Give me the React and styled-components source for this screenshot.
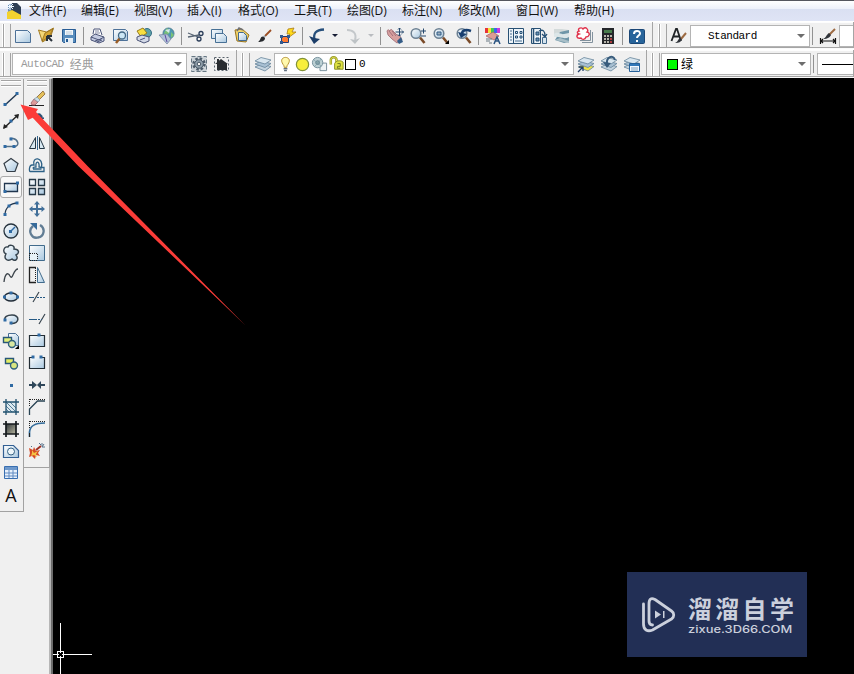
import React from "react"
import styled, {createGlobalStyle} from "styled-components"

const NAVY = "#20364f"
const BLUE = "#2f6aa3"

const menus = [
  {label: "文件(F)", width: 52},
  {label: "编辑(E)", width: 53},
  {label: "视图(V)", width: 53},
  {label: "插入(I)", width: 51},
  {label: "格式(O)", width: 56},
  {label: "工具(T)", width: 53},
  {label: "绘图(D)", width: 55},
  {label: "标注(N)", width: 56},
  {label: "修改(M)", width: 58},
  {label: "窗口(W)", width: 58},
  {label: "帮助(H)", width: 60}
]

const standardTools = [
  "new", "open", "save", "|",
  "print", "preview", "publish", "dwf", "|",
  "cut", "copy", "paste", "brush", "blockEdit", "|",
  "undo", "more", "redo", "moreOff", "|",
  "pan", "zoom", "zoomWindow", "zoomPrevious", "|",
  "properties", "designCenter", "palettes", "sheetSet", "markup", "calculator", "|",
  "help"
]

const drawTools = [
  "line", "xline", "pline", "polygon", "rectangle", "arc", "circle", "cloud",
  "spline", "ellipse", "ellipseArc", "insertBlock", "makeBlock", "point",
  "hatch", "gradient", "region", "table", "text"
]

const modifyTools = [
  "erase", "copyObject", "mirror", "offset", "array", "move", "rotate", "scale",
  "stretch", "trim", "extend", "breakPoint", "break", "join", "chamfer",
  "fillet", "explode"
]

const Dot = ({x, y, s = 3}) => (
  <rect x={x - s / 2} y={y - s / 2} width={s} height={s} fill={BLUE}/>
)

const Lens = ({x = 7, y = 6.5, r = 4.8}) => (
  <g>
    <path d={`M${x + 4} ${y + 4}L15.500 16`} stroke="#7a4a28" strokeWidth="2.600"/>
    <circle cx={x} cy={y} r={r} fill="url(#ice)" stroke="#6d8193" strokeWidth="1.500"/>
  </g>
)

const Layers = ({bottom = "#c3d3df"}) => (
  <g stroke="#66849b" strokeWidth=".8">
    <path d="M1 12l6-3 10 2.500-6 4.500z" fill={bottom}/>
    <path d="M1 9l6-3 10 2.500-6 4z" fill="#a8c0d3"/>
    <path d="M1 6l6-3.500 10 2.500-6 4z" fill="#d8e6ef"/>
  </g>
)

const glyphs = {
  new: <path d="M1.500 3.500h12l3 3v9h-15z" fill="url(#ice)" stroke="#4d7198"/>,
  open: (
    <g>
      <path d="M1.500 3l8 2 7-4-3 9-8 5z" fill="#f4d878" stroke="#a37b22"/>
      <path d="M5 14l3-8 8-4-4 8z" fill="#d6a735" stroke="#876116" strokeWidth=".7"/>
      <path d="M10 9l5 5m-5-5v5m0-5h5" stroke="#29323b" strokeWidth="2"/>
    </g>
  ),
  save: (
    <g>
      <path d="M2.500 2.500h13v13h-12l-1-1z" fill="#588dbd" stroke="#285c94"/>
      <path d="M5 3h8v5H5z" fill="#f5f9fc"/>
      <path d="M5 11h8v5H5z" fill="#e5eef6"/>
      <path d="M6 12h2v3H6z" fill="#245990"/>
      <path d="M6 5h6M6 7h6" stroke="#a4b8ca" strokeWidth=".7"/>
    </g>
  ),
  print: (
    <g stroke="#4c5578">
      <path d="M4 7l1-5h6l2 6" fill="#fff"/>
      <path d="M2 10l4-3 9 3v4l-5 2-8-3z" fill="#c4cbe1"/>
      <path d="M2 10l8 3 5-3m-9 4l6-2m-4 3l5-2" fill="none"/>
      <path d="M6 4h4M6 6h5" strokeWidth=".7"/>
    </g>
  ),
  preview: (
    <g>
      <path d="M1.500 2.500h12l2 2v9h-14z" fill="url(#ice)" stroke="#4d7198"/>
      <path d="M8 11l-4 5" stroke="#985c25" strokeWidth="2.500"/>
      <circle cx="10" cy="8.500" r="3.500" fill="#cce7f5" stroke="#426784" strokeWidth="1.300"/>
    </g>
  ),
  publish: (
    <g>
      <circle cx="12" cy="6" r="4.500" fill="#5da1a6" stroke="#356d85"/>
      <path d="M2 4l6-3 4 5-6 4z" fill="#f8df40" stroke="#987d1d"/>
      <path d="M2 10l5-2 7 2v4l-5 2-7-3z" fill="#d3d9e7" stroke="#4c5578"/>
      <path d="M5 13l5-2" stroke="#4c5578"/>
    </g>
  ),
  dwf: (
    <g>
      <circle cx="10.500" cy="6.500" r="5.500" fill="#4f98b2" stroke="#528094"/>
      <path d="M9 1l3 4-4 5-2-4zM13 5l3 3-3 3z" fill="#7ac276"/>
      <path d="M7 3l5-1-1 4z" fill="#d6e9e9"/>
      <path d="M1 8l8-1 4 5-4 5z" fill="#b1c1d8" stroke="#6e809e" strokeWidth=".7"/>
      <path d="M7 8l2 7" stroke="#5c47a1"/>
    </g>
  ),
  cut: (
    <g fill="none" stroke="#293c58" strokeWidth="1.300">
      <path d="M1 6l10 4M1 10l11-2" stroke="#596675"/>
      <circle cx="14" cy="6.500" r="2"/>
      <circle cx="12" cy="12" r="2"/>
    </g>
  ),
  copy: (
    <g fill="url(#ice)" stroke="#477095">
      <path d="M1.500 2.500h11v9h-11z"/>
      <path d="M5.500 6.500h8l3 3v6h-11z"/>
    </g>
  ),
  paste: (
    <g>
      <path d="M2 3l7-1 7 6-3 7-9-1z" fill="#efd26a" stroke="#97731f"/>
      <path d="M5.500 5.500h5l3 3v5h-8z" fill="url(#ice)" stroke="#426a91"/>
      <path d="M4 4l2-3 4 2" fill="none" stroke="#6f7177" strokeWidth="1.500"/>
    </g>
  ),
  brush: (
    <g>
      <path d="M9 9l6-6" stroke="#9c4f24" strokeWidth="1.800"/>
      <path d="M7.500 9l1.500 1.500" stroke="#a6afb7" strokeWidth="2.500"/>
      <path d="M2 15c4 0 7-1 7-4L7 9.500c-3 0-2 3.500-5 5.500z" fill="#26292d"/>
    </g>
  ),
  blockEdit: (
    <g>
      <path d="M2.500 9.500h7v6h-7z" fill="#ff7b32" stroke="#263e76"/>
      <path d="M9 2l6-1-2 4h4l-8 6 2-4H8z" fill="#ffda1c" stroke="#a97b14" strokeWidth=".8"/>
      <path d="M1 8h3v3H1zM8 8h3v3H8zM1 14h3v3H1z" fill="#315b91"/>
    </g>
  ),
  undo: (
    <g>
      <path d="M6.500 13C5 6 8 3 16 2.500" fill="none" stroke="#264f7b" strokeWidth="2.300"/>
      <path d="M1 9l5 8 6-5-5.500-1z" fill="#1c3e69"/>
    </g>
  ),
  redo: (
    <g>
      <path d="M11 13C13 6 9 3 3 3" fill="none" stroke="#c4c8cb" strokeWidth="2"/>
      <path d="M6 12l5 5 5-6-5 2z" fill="#bdc2c5"/>
    </g>
  ),
  pan: (
    <g>
      <path d="M1 4c1-2 2-1 3 0 0-2 2-2 3 0l4 4 3 1 2 4-5 3-5-4-4-4z" fill="#d8a09f" stroke="#9a6770" strokeWidth=".8"/>
      <path d="M3 4l4 5M6 4l4 5" stroke="#966571" strokeWidth=".8"/>
      <path d="M11 14l4-4 2 5-4 2z" fill="#345c87"/>
      <path d="M13.500 1v8M9.500 5h8M12 2.500L13.500 1 15 2.500M12 7.500L13.500 9 15 7.500M16 3.500L17.500 5 16 6.500" fill="none" stroke="#24476c"/>
    </g>
  ),
  zoom: <g><Lens/><path d="M12 4h5M14.500 1.500v5M12 9h5" stroke="#24476c"/></g>,
  zoomWindow: <g><Lens/><path d="M5 5h4v3H5z" fill="#9eafbd" stroke="#315d87"/><path d="M13 17h4v-4z" fill="#000"/></g>,
  zoomPrevious: <g><Lens/><path d="M7 7c0-4 4-5 9-3" fill="none" stroke="#183f70" strokeWidth="2.500"/><path d="M3 5l3 6 6-4z" fill="#183f70"/></g>,
  properties: (
    <g>
      <path d="M1 1h3v5H1z" fill="#e93436"/><path d="M4 1h3v5H4z" fill="#f3e63b"/>
      <path d="M7 1h3v5H7z" fill="#42c854"/><path d="M10 1h3v5h-3z" fill="#3967ed"/><path d="M13 1h3v5h-3z" fill="#c839dc"/>
      <path d="M2 9l7-4 6 4-5 4z" fill="#dc9b94" stroke="#a25d60" strokeWidth=".7"/>
      <path d="M2 12h6M2 14h4M5 16h3" stroke="#687883"/>
      <path d="M10 17l3-7 3 7m-5-3h4" stroke="#295380" fill="none" strokeWidth="1.500"/>
    </g>
  ),
  designCenter: (
    <g>
      <path d="M1.500 1.500h15v15h-15zM6.500 2v14" fill="#edf4f9" stroke="#295174"/>
      <path d="M3 4h2M3 7h2M3 10h2M3 13h2" stroke="#466d90"/>
      <path d="M8.500 4.500h2v2h-2zM13 4.500h2v2h-2zM8.500 9h2v2h-2zM13 9h2v2h-2z" fill="none" stroke="#244f75"/>
      <path d="M8 14h7" stroke="#466d90"/>
    </g>
  ),
  palettes: (
    <g>
      <path d="M1.500 1.500h9v15h-9z" fill="#edf4f9" stroke="#295174"/>
      <path d="M3.500 2v14" stroke="#295174" strokeWidth="1.500"/>
      <path d="M6 5h3v3H6zM6 11h3v3H6z" fill="#6790b1" stroke="#244f75"/>
      <path d="M9 4c4-2 6 0 6 5m-3-2l3 3 2-3" fill="none" stroke="#244f75" strokeWidth="1.300"/>
      <path d="M12.500 10.500h4v6h-4z" fill="#d6e4ee" stroke="#41698b"/>
    </g>
  ),
  sheetSet: (
    <g>
      <path d="M1 2h8l7 1v9l-7-1-8-2z" fill="#d3dada"/>
      <path d="M7 5l9-2v12l-5 1-9-3z" fill="#6f96a8"/>
      <path d="M1 7c4-3 7 1 10 0l5-1v4c-5 3-9-1-15 0z" fill="#dce6e8"/>
      <path d="M2 13l5-2 9 3v2z" fill="#a9bfc8"/>
    </g>
  ),
  markup: (
    <g>
      <path d="M6 15.500h10.500V5M4 13.500h10.500V3" fill="none" stroke="#81919d"/>
      <path d="M3 4c-2-3 3-4 4-2 3-3 6 1 4 3 4 1 2 5-1 5-1 3-4 3-5 1-5 1-5-3-2-4-3-1-1-3 0-3z" fill="#fff" stroke="#e0324b" strokeWidth="1.400"/>
    </g>
  ),
  calculator: (
    <g>
      <path d="M3 1h12v16H3z" fill="#24262a"/><path d="M5 3h8v3H5z" fill="#487c4c"/>
      <path d="M5 9h2M8 9h2M11 9h2M5 12h2M8 12h2M5 15h2M8 15h2" stroke="#e7e5d6" strokeWidth="1.500"/>
      <path d="M11 12h2M11 15h2" stroke="#db4646" strokeWidth="1.500"/>
    </g>
  ),
  help: (
    <g>
      <rect x="1.500" y="2.500" width="15" height="14" rx="1" fill="#28649a" stroke="#1b4776"/>
      <path d="M6 7c0-4 6-4 6-.5 0 2-3 2-3 4.500M9 13v2" fill="none" stroke="#fff" strokeWidth="2"/>
    </g>
  ),
  textStyle: (
    <g>
      <path d="M1.500 14L6 2h1l4 12M3.500 9.500h6" fill="none" stroke="#202427" strokeWidth="1.800"/>
      <path d="M11 12l5-6" stroke="#9c6a42" strokeWidth="2"/>
      <path d="M5 16c4 0 6-1 7-4l-2-1c-2 1-2 4-5 5z" fill="#30343a"/>
    </g>
  ),
  dimStyle: (
    <g>
      <path d="M1.500 11v6M16.500 11v6M2 14h14M4 12l-2 2 2 2M14 12l2 2-2 2" fill="none" stroke="#111" strokeWidth="1.200"/>
      <path d="M10 8l6-6" stroke="#9c6a42" strokeWidth="2"/>
      <path d="M4 12c5 0 7-2 8-4l-2-2c-3 2-3 5-6 6z" fill="#30343a"/>
    </g>
  ),
  settings: (
    <g>
      <path d="M1.500 1.500h15v15h-15z" fill="#cbd2d7" stroke="#667783" strokeDasharray="4 2"/>
      <circle cx="9" cy="9" r="5.500" stroke="#4c5b69" strokeWidth="2.500" strokeDasharray="2.500 1.800"/>
      <circle cx="9" cy="9" r="4.300" fill="#93a2ae" stroke="#485866"/>
      <circle cx="9" cy="9" r="1.800" fill="#f5f5f5" stroke="#465562"/>
    </g>
  ),
  workspace: (
    <g>
      <rect x="1.500" y="2.500" width="14" height="13" stroke="#59636c" strokeDasharray="2 2"/>
      <path d="M2 9l6-5 7 5h-1v6H4V9z" fill="#292d31"/><path d="M4 4h2v4H4z" fill="#292d31"/>
    </g>
  ),
  layers: <Layers/>,
  layerCurrent: <g><Layers bottom="#f1e343"/><path d="M1 17l5-5m-4 0h4v4" fill="none" stroke="#203e67" strokeWidth="1.300"/></g>,
  layerPrevious: <g><Layers/><path d="M7 9c-1-7 6-10 8-4" fill="none" stroke="#375b7c" strokeWidth="2"/><path d="M3 7l4 6 4-5z" fill="#375b7c"/></g>,
  layerState: <g><Layers/><path d="M6.500 8.500h10v8h-10z" fill="#f4f9ff" stroke="#25619a"/><path d="M7 9h9v2H7z" fill="#3278b8"/><path d="M8 13h7M8 15h7" stroke="#799ebc"/></g>,
  bulb: (
    <g>
      <path d="M6.500 9C3 4 6 1.500 9 1.500S15 4 11.500 9c-1 1-1 2-1 3h-3c0-1 0-2-1-3z" fill="#fff9ae" stroke="#b18d2c"/>
      <path d="M7 13.500h4M7.500 15.500h3" stroke="#627080" strokeWidth="1.500"/>
    </g>
  ),
  sun: <circle cx="9" cy="9" r="6.500" fill="#f7ee3c" stroke="#829238" strokeWidth="1.300"/>,
  freeze: (
    <g>
      <path d="M9.500 7.500h7v8h-7z" fill="#edf3f5" stroke="#758c99"/>
      <circle cx="7" cy="7" r="5.500" fill="#bcd0d4" stroke="#718d99"/>
      <circle cx="7" cy="7" r="2" fill="#8eadb0" stroke="#638390"/>
      <path d="M3 4l8 7M11 3l-7 8" stroke="#7898a2" strokeWidth=".7"/>
    </g>
  ),
  lock: (
    <g>
      <path d="M3 9V4c0-3.500 6-3.500 6 0v6" fill="none" stroke="#92951d" strokeWidth="2.600"/>
      <path d="M3 9V4c0-3.500 6-3.500 6 0v6" fill="none" stroke="#eae85a"/>
      <path d="M8 6.500c2-2 6-2 8 0V14H7V8z" fill="#dfe240" stroke="#8b9121"/>
      <path d="M10 8h3v3h-3v2h3" fill="none" stroke="#747c20"/>
    </g>
  ),
  line: <g><path d="M3 15L15 4" stroke={NAVY} strokeWidth="1.400"/><Dot x={3} y={14.5}/><Dot x={15} y={3.5}/></g>,
  xline: <g><path d="M2 16L16 3" stroke="#222" strokeWidth="1.400"/><path d="M1 17l1-5 4 3zM17 2l-5 1 4 4z" fill="#222"/><Dot x={9} y={9}/></g>,
  pline: <g><path d="M3 12.500h10c5-1 3-7-2-8H8" fill="none" stroke="#526f88" strokeWidth="1.400"/><Dot x={3} y={12.5}/><Dot x={9} y={5}/><Dot x={12} y={12.5}/></g>,
  polygon: <path d="M9 2.500l7 5-3 8H5l-3-8z" fill="url(#ice)" stroke="#343e47" strokeWidth="1.200"/>,
  rectangle: <g><path d="M2.500 5.500h13v8h-13z" fill="url(#ice)" stroke={NAVY} strokeWidth="1.300"/><Dot x={3} y={13.5}/><Dot x={15.5} y={5}/></g>,
  arc: <g><path d="M3 15C3 8 8 3 16 3" fill="none" stroke={NAVY} strokeWidth="1.300"/><Dot x={3} y={14.5}/><Dot x={7} y={6}/><Dot x={15} y={3}/></g>,
  circle: <g><circle cx="9" cy="9" r="7" fill="url(#ice)" stroke="#26333e" strokeWidth="1.300"/><path d="M8 10l5-5" stroke={BLUE} strokeWidth="1.500"/><Dot x={8.5} y={9.5}/></g>,
  cloud: <path d="M4 10C0 8 2 2 6 3c1-3 7-2 6 2 5 0 6 4 2 6 3 4-1 7-4 4-4 3-9 0-6-5z" fill="url(#ice)" stroke="#34414b" strokeWidth="1.400"/>,
  spline: <path d="M2 16C3 7 6 6 8 10c3 5 3-7 8-7" fill="none" stroke="#3b434a" strokeWidth="1.300"/>,
  ellipse: <g><ellipse cx="9" cy="9" rx="6.500" ry="4" fill="url(#ice)" stroke="#222d38" strokeWidth="1.400"/><Dot x={2.5} y={9}/><Dot x={15.5} y={9}/><Dot x={9} y={5}/></g>,
  ellipseArc: <g><path d="M9 13.500c9 0 9-8.500 1-8.500-5 0-8 2-7 5l6 1z" fill="url(#ice)"/><path d="M9 13.500c9 0 9-8.500 1-8.500-5 0-8 2-7 5" stroke="#34414b" strokeWidth="1.500"/><Dot x={3} y={10}/><Dot x={9} y={13}/></g>,
  insertBlock: (
    <g>
      <path d="M6.500 1.500h7l3 3v9h-10z" fill="url(#ice)" stroke="#496e93"/>
      <path d="M1.500 5.500h8v5h-8z" fill="#e2ef79" stroke="#285777" strokeWidth="1.400"/>
      <circle cx="10" cy="12" r="3.500" fill="#d8e7a1" stroke="#31617d" strokeWidth="1.400"/>
      <path d="M13 17h4v-4z" fill="#000"/>
    </g>
  ),
  makeBlock: <g><path d="M3.500 4.500h8v5h-8z" fill="#e3ed62" stroke="#285777" strokeWidth="1.400"/><circle cx="12" cy="11.500" r="3.500" fill="#d8e580" stroke="#31617d" strokeWidth="1.400"/></g>,
  point: <rect x="8" y="8" width="3" height="3" fill={BLUE}/>,
  hatch: <g><path d="M4 4h10v10H4z" fill="#dbe9ef"/><path d="M4 4l10 10M4 8l6 6M8 4l6 6M4 11l3 3" stroke="#557d98"/><path d="M1 4h16M1 14h16M4 1v16M14 1v16" stroke="#21516f" strokeWidth="1.300"/></g>,
  gradient: <g><path d="M4 4h10v10H4z" fill="url(#metal)"/><path d="M1 4h16M1 14h16M4 1v16M14 1v16" stroke="#14191d" strokeWidth="1.700"/></g>,
  region: <g><path d="M1.500 3.500h10l5 5v7h-15z" fill="url(#ice)" stroke="#325f93" strokeWidth="1.200"/><circle cx="9" cy="9.500" r="3.500" fill="#eef6fa" stroke="#315f83"/></g>,
  table: (
    <g>
      <path d="M2.500 2.500h13v12h-13z" fill="#e8f1fc" stroke="#386eb0"/>
      <path d="M3 3h12v3H3z" fill="#6d98cc"/>
      <path d="M3 9h12M3 12h12M7 6v8M11 6v8" stroke="#618bc2"/>
    </g>
  ),
  erase: (
    <g>
      <path d="M1 15.500h15" stroke="#222"/><path d="M8 8l7-7 2 3-7 7z" fill="#e5c15b" stroke="#846130" strokeWidth=".8"/>
      <path d="M6 9l4 3-3 3H4l-1-2z" fill="#dd9b9a" stroke="#99606a" strokeWidth=".8"/>
      <path d="M6 9l3-2 3 3-2 2z" fill="#c9dce7" stroke="#78909c" strokeWidth=".6"/>
    </g>
  ),
  copyObject: <path d="M8 3c3-3 7 0 6 3l2 0-4 3-2-4 2 0c0-2-2-2-4-2z" fill="#285175" stroke="#285175"/>,
  mirror: <g><path d="M7.500 3.500v11h-6zM11.500 3.500v11h5z" fill="#d9e9f2" stroke="#243745"/><path d="M9.500 2v14" stroke="#356790"/></g>,
  offset: (
    <g fill="none" stroke="#2d6186" strokeWidth="1.300">
      <path d="M2 15.500h14v-4h-2.500C16 1 3.500 0 6 9H4c-3 0-3 6.500-2 6.500z"/>
      <path d="M5 13h8.500M5 12.500c0-2 1-1 3-1.500-1-7 4-6 3 0l2.500.5"/>
    </g>
  ),
  array: <g fill="url(#ice)" stroke="#263947" strokeWidth="1.300"><path d="M1.500 1.500h6v6h-6zM10.500 1.500h6v6h-6zM1.500 10.500h6v6h-6zM10.500 10.500h6v6h-6z"/></g>,
  move: <path d="M9 1l3 3.500h-2V8h3.500V6l3.500 3-3.500 3v-2H10v3.500h2L9 17l-3-3.500h2V10H4.500v2L1 9l3.500-3v2H8V4.500H6z" fill="#416f99"/>,
  rotate: <g><path d="M5 4C-1 9 4 17 10 15.500c6-1 8-9 2-12.500" fill="none" stroke="#627d94" strokeWidth="2.300"/><path d="M2 1h7v7z" fill="#376b9a"/></g>,
  scale: <g><path d="M1.500 1.500h15v15h-15z" fill="url(#ice)" stroke="#416b8c"/><path d="M2 9h7v7H2z" fill="#e8f2f7"/><path d="M2 9.500h7.500V16M1.500 9v7.500H10" fill="none" stroke="#222" strokeDasharray="1 1"/></g>,
  stretch: <g><path d="M9.500 1.500l7 15h-7z" fill="url(#ice)" stroke="#416b8c"/><path d="M8 1.500H1.500v15H8" fill="none" stroke="#222" strokeWidth="1.300"/><path d="M7.500 2v14" stroke="#222" strokeDasharray="1 1"/></g>,
  trim: <g><path d="M1 9.500h5" stroke="#255984"/><path d="M5 14L11 4" stroke="#39454f" strokeWidth="1.200"/><path d="M9 9.500h8" stroke="#255984" strokeDasharray="2 1"/></g>,
  extend: <g><path d="M1 9.500h6" stroke="#255984"/><path d="M11 14l6-10" stroke="#39454f" strokeWidth="1.200"/><path d="M7 9.500h7" stroke="#255984" strokeDasharray="2 1"/></g>,
  breakPoint: <g><path d="M1.500 3.500h15v11h-15z" fill="url(#ice)" stroke="#222d35" strokeWidth="1.200"/><Dot x={11} y={3}/></g>,
  break: <g><path d="M5 3.500H1.500v11h15v-11H13" fill="url(#ice)" stroke="#222d35" strokeWidth="1.200"/><Dot x={5} y={3}/><Dot x={13} y={3}/></g>,
  join: <path d="M1 8h3V5l5 4 4-4v3h4v2h-4v3L9 9l-5 4v-3H1z" fill="#2e4659"/>,
  chamfer: <g fill="none"><path d="M2 1.500h15M1.500 1v8" stroke="#222" strokeDasharray="1 1"/><path d="M1.500 17v-6l8-8H17" stroke="#294353" strokeWidth="1.300"/></g>,
  fillet: <g fill="none"><path d="M2 1.500h15M1.500 1v8" stroke="#222" strokeDasharray="1 1"/><path d="M1.500 17v-5C2 6 6 3 17 3" stroke="#326b9a" strokeWidth="1.700"/><path d="M1.500 17v-4" stroke="#222"/></g>,
  explode: (
    <g>
      <path d="M1 6l4 2 1-3 2 4 4-1-2 3 2 3-4-1-1 4-3-3-3 1 1-4z" fill="#d64a26"/>
      <path d="M4 8l2 3 4-2-2 3 1 3-3-2-3 1 1-3z" fill="#f5c143"/>
      <path d="M8 8l5-4" stroke="#9e3024" strokeWidth="2"/>
      <path d="M11 1l2 2m1-2v3m2-2l-2 3m3 0h-3M3 4l1 1" stroke="#54708a"/>
    </g>
  )
}

const Icon = ({name}) => {
  if (name === "text") return <LetterIcon>A</LetterIcon>
  return <Glyph viewBox="0 0 18 18" fill="none">{glyphs[name]}</Glyph>
}

const Tool = ({name}) => {
  if (name === "|") return <Separator/>
  if (name === "more" || name === "moreOff") {
    return <MoreCell><Caret small color={name === "more" ? "#171d35" : "#b9bcc0"}/></MoreCell>
  }
  return <ToolCell><Icon name={name}/></ToolCell>
}

// Gradients shared by every toolbar glyph
const Gradients = () => (
  <Defs>
    <defs>
      <linearGradient id="ice" x2="1" y2="1">
        <stop stopColor="#fff"/>
        <stop offset="1" stopColor="#a9c8e0"/>
      </linearGradient>
      <linearGradient id="metal" x2="1" y2="1">
        <stop stopColor="#32383b"/>
        <stop offset="1" stopColor="#b8b7a0"/>
      </linearGradient>
    </defs>
  </Defs>
)

const AppLogo = () => (
  <Glyph viewBox="0 0 18 18">
    <path d="M2 2h9l4 4v11H2z" fill="#6b8db4"/>
    <path d="M6 1h5l4 4v8L5 9z" fill="#2e3e54"/>
    <path d="M1 10l5-2 9 5v4H1z" fill="#f3d22f"/>
    <path d="M4 1v7M1 4.500h7M2 2l5 5M7 2L2 7" stroke="#eef7ff"/>
  </Glyph>
)

const App = () => (
  <Window>
    <GlobalStyle/>
    <Gradients/>

    <MenuBar>
      <LogoCell><AppLogo/></LogoCell>
      {menus.map(({label, width}) => <MenuItem key={label} width={width}>{label}</MenuItem>)}
    </MenuBar>

    <ToolRow height={28}>
      <Toolbar width={653}>
        <Grip/>
        {standardTools.map((name, i) => <Tool key={i} name={name}/>)}
      </Toolbar>
      <Toolbar width={201}>
        <Grip lead={6} width={14}/>
        <ToolCell><Icon name="textStyle"/></ToolCell>
        <Combo width={120} pad={17}><Mono>Standard</Mono><Caret/></Combo>
        <Separator/>
        <ToolCell><Icon name="dimStyle"/></ToolCell>
        <Combo width={30}/>
      </Toolbar>
    </ToolRow>

    <ToolRow height={29}>
      <Toolbar width={237}>
        <Grip width={12}/>
        <Combo width={175} pad={8} disabled><Mono>AutoCAD</Mono><Han>经典</Han><Caret/></Combo>
        <ToolCell><Icon name="settings"/></ToolCell>
        <ToolCell><Icon name="workspace"/></ToolCell>
      </Toolbar>
      <Toolbar width={410}>
        <Grip lead={5} width={14}/>
        <ToolCell><Icon name="layers"/></ToolCell>
        <Combo width={300} pad={1}>
          <LayerIcons>
            <Icon name="bulb"/>
            <Icon name="sun"/>
            <Icon name="freeze"/>
            <Icon name="lock"/>
          </LayerIcons>
          <Swatch color="#fff"/>
          <Mono>0</Mono>
          <Caret/>
        </Combo>
        <ToolCell><Icon name="layerCurrent"/></ToolCell>
        <ToolCell><Icon name="layerPrevious"/></ToolCell>
        <ToolCell><Icon name="layerState"/></ToolCell>
      </Toolbar>
      <Toolbar width={207}>
        <Grip lead={5} width={14}/>
        <Combo width={150} pad={5}><Swatch color="#00fc00"/><Han>绿</Han><Caret/></Combo>
        <Separator/>
        <Combo width={60} pad={4}><LineSample/></Combo>
      </Toolbar>
    </ToolRow>

    <Workspace>
      <Palettes>
        <Palette width={24} inset={1}>
          <TopGrip/>
          {drawTools.map(name => <PaletteTool key={name} active={name === "rectangle"}><Icon name={name}/></PaletteTool>)}
        </Palette>
        <Palette width={26}>
          <TopGrip/>
          {modifyTools.map(name => <PaletteTool key={name}><Icon name={name}/></PaletteTool>)}
        </Palette>
      </Palettes>
      <Canvas>
        <Crosshair viewBox="0 0 40 52" shapeRendering="crispEdges">
          <path d="M7.500 1v27M7.500 36v16M0 32.500h4M11 32.500h28" stroke="#fff"/>
          <path d="M4.500 29.500h6v6h-6zM7.500 28v3M7.500 34v3M3 32.500h3M9 32.500h3" fill="none" stroke="#fff"/>
        </Crosshair>
        <Watermark>
          <PlayMark viewBox="0 0 36 38">
            <path d="M2.500 8v20c0 6 4 8 9 6l19-11c3-2 3-6 0-8L14 3.500C10 1.500 8 3 8 8v17c0 3 1 4 3.500 4" fill="none" stroke="#cbd0dc" strokeWidth="2.800" strokeLinecap="round" strokeLinejoin="round"/>
            <path d="M14 14.500l6 4-6 4zM22 15h1.500v7H22z" fill="#cbd0dc"/>
          </PlayMark>
          <Brand>
            <BrandName>溜溜自学</BrandName>
            <BrandUrl>zixue.3D66.COM</BrandUrl>
          </Brand>
        </Watermark>
      </Canvas>
      <Pointer viewBox="0 0 230 230">
        <path d="M.5 5.500L18 10l-2 3 16 16.700L67.500 67 225 226 58.300 67 12.700 18.700 8 21z" fill="#fb3c38"/>
      </Pointer>
    </Workspace>
  </Window>
)

const GlobalStyle = createGlobalStyle`
  * {
    box-sizing: border-box;
  }

  body {
    margin: 0;
    overflow: hidden;
  }
`

const Window = styled.div`
  display: flex;
  flex-direction: column;
  width: 854px;
  height: 674px;
  overflow: hidden;
  background: #f0f0f0;
  color: #111;
  font-family: "Open Sans", "Noto Sans CJK SC", sans-serif;
  font-size: 12px;
`

const Defs = styled.svg`
  position: absolute;
  width: 0;
  height: 0;
`

const Glyph = styled.svg`
  display: block;
  flex: none;
  width: 18px;
  height: 18px;
`

const LetterIcon = styled.span`
  font: 18px/18px "Open Sans", sans-serif;
  color: #111;
`

const MenuBar = styled.div`
  display: flex;
  align-items: center;
  height: 21px;
  border-top: 1px solid #55565e;
  background: linear-gradient(#fff 0, #eef1fa 38%, #dae0f2 42%, #dfe4f5 100%);
`

const LogoCell = styled.div`
  width: 29px;
  padding-left: 6px;
`

const MenuItem = styled.span`
  flex: none;
  width: ${p => p.width}px;
  line-height: 20px;
  white-space: nowrap;
`

const ToolRow = styled.div`
  display: flex;
  flex: none;
  height: ${p => p.height}px;
  border-top: 1px solid #fff;
  border-bottom: 1px solid #fafafa;
`

const Toolbar = styled.div`
  display: flex;
  flex: none;
  align-items: center;
  width: ${p => p.width}px;
  padding-top: 2px;
  overflow: hidden;
  border-right: 1px solid #a5a5a5;
  border-bottom: 1px solid #a5a5a5;
  box-shadow: inset 0 1px #fdfdfd;
`

const Grip = styled.div`
  flex: none;
  width: ${p => p.width || 11.5}px;
  height: 23px;
  padding-left: ${p => p.lead || 3}px;

  &::before {
    content: "";
    display: block;
    width: 6px;
    height: 100%;
    border: solid #a3a3a3;
    border-width: 0 1px;
    box-shadow: inset 1px 0 #fff, -1px 0 #fff;
  }
`

const ToolCell = styled.div`
  display: flex;
  flex: none;
  align-items: center;
  justify-content: center;
  width: 23px;
  height: 22px;
`

const MoreCell = styled.div`
  display: flex;
  flex: none;
  justify-content: center;
  width: 13px;
`

const Separator = styled.div`
  flex: none;
  width: 1px;
  height: 18px;
  margin: 0 3px 0 2px;
  background: #929292;
`

const Caret = styled.span`
  flex: none;
  width: 0;
  height: 0;
  margin-left: auto;
  margin-right: ${p => p.small ? "auto" : "4px"};
  border: solid transparent;
  border-width: ${p => p.small ? "3px 3px 0" : "4px 4px 0"};
  border-top-color: ${p => p.color || "#6d6d6d"};
`

const Combo = styled.div`
  display: flex;
  flex: none;
  align-items: center;
  width: ${p => p.width}px;
  height: 22px;
  padding-left: ${p => p.pad || 0}px;
  border: 1px solid #b4b4b4;
  background: #fff;
  color: ${p => p.disabled ? "#9b9b9b" : "#000"};
`

const Mono = styled.span`
  font: 11px/20px "Liberation Mono", monospace;
  letter-spacing: -0.5px;
`

const Han = styled.span`
  margin-left: 6px;
  font: 12px/20px "Noto Sans CJK SC", sans-serif;

  ${Mono} + & {
    margin-left: 6px;
  }
`

const LayerIcons = styled.div`
  display: flex;
  width: 69px;
  padding-left: 1px;

  svg {
    width: 17px;
    height: 17px;
  }
`

const Swatch = styled.span`
  flex: none;
  width: 11px;
  height: 11px;
  border: 1px solid #000;
  background: ${p => p.color};

  & + ${Mono} {
    margin-left: 3px;
  }

  & + ${Han} {
    margin-left: 3px;
  }
`

const LineSample = styled.span`
  width: 50px;
  height: 1px;
  background: #000;
`

const Workspace = styled.div`
  position: relative;
  display: flex;
  flex: 1;
`

const Palettes = styled.div`
  display: flex;
  flex: none;
  align-items: flex-start;
  width: 53px;
  border-top: 1px solid #d0d0d0;
  border-right: 2px solid #6c6c6c;
  box-shadow: inset -2px 0 #b6b6b6;
`

const Palette = styled.div`
  display: flex;
  flex-direction: column;
  align-items: center;
  width: ${p => p.width}px;
  padding-right: ${p => p.inset || 0}px;
  padding-bottom: 5px;
  border-right: 1px solid #a2a2a2;
  border-bottom: 1px solid #a2a2a2;
`

const TopGrip = styled.div`
  width: 20px;
  height: 6px;
  margin: 1px 0 2px;
  border: solid #a3a3a3;
  border-width: 1px 0;
  box-shadow: inset 0 1px #fff, 0 1px #fff;
`

const PaletteTool = styled.div`
  display: flex;
  align-items: center;
  justify-content: center;
  width: 22px;
  height: 22px;
  border: 1px solid ${p => p.active ? "#aaa" : "transparent"};
  border-radius: 3px;
  background: ${p => p.active ? "#f8f8f8" : "none"};
`

const Canvas = styled.div`
  position: relative;
  flex: 1;
  background: #000;
`

const Crosshair = styled.svg`
  position: absolute;
  left: 0;
  bottom: 0;
  width: 40px;
  height: 52px;
`

const Watermark = styled.div`
  position: absolute;
  right: 47px;
  bottom: 17px;
  display: flex;
  align-items: center;
  width: 180px;
  height: 85px;
  padding-left: 14px;
  background: #222f55;
  color: #cbd0dc;
`

const PlayMark = styled.svg`
  flex: none;
  width: 36px;
  height: 38px;
`

const Brand = styled.div`
  display: flex;
  flex-direction: column;
  margin-left: 11px;
`

const BrandName = styled.span`
  font: 700 24px/26px "Noto Sans CJK SC", sans-serif;
  letter-spacing: 3.300px;
  white-space: nowrap;
`

const BrandUrl = styled.span`
  margin-top: 3px;
  font: 500 10px/10px "Inter", sans-serif;
  transform: scaleX(1.290);
  transform-origin: left;
  white-space: nowrap;
`

const Pointer = styled.svg`
  position: absolute;
  left: 20px;
  top: 21px;
  width: 230px;
  height: 230px;
`

export default App
